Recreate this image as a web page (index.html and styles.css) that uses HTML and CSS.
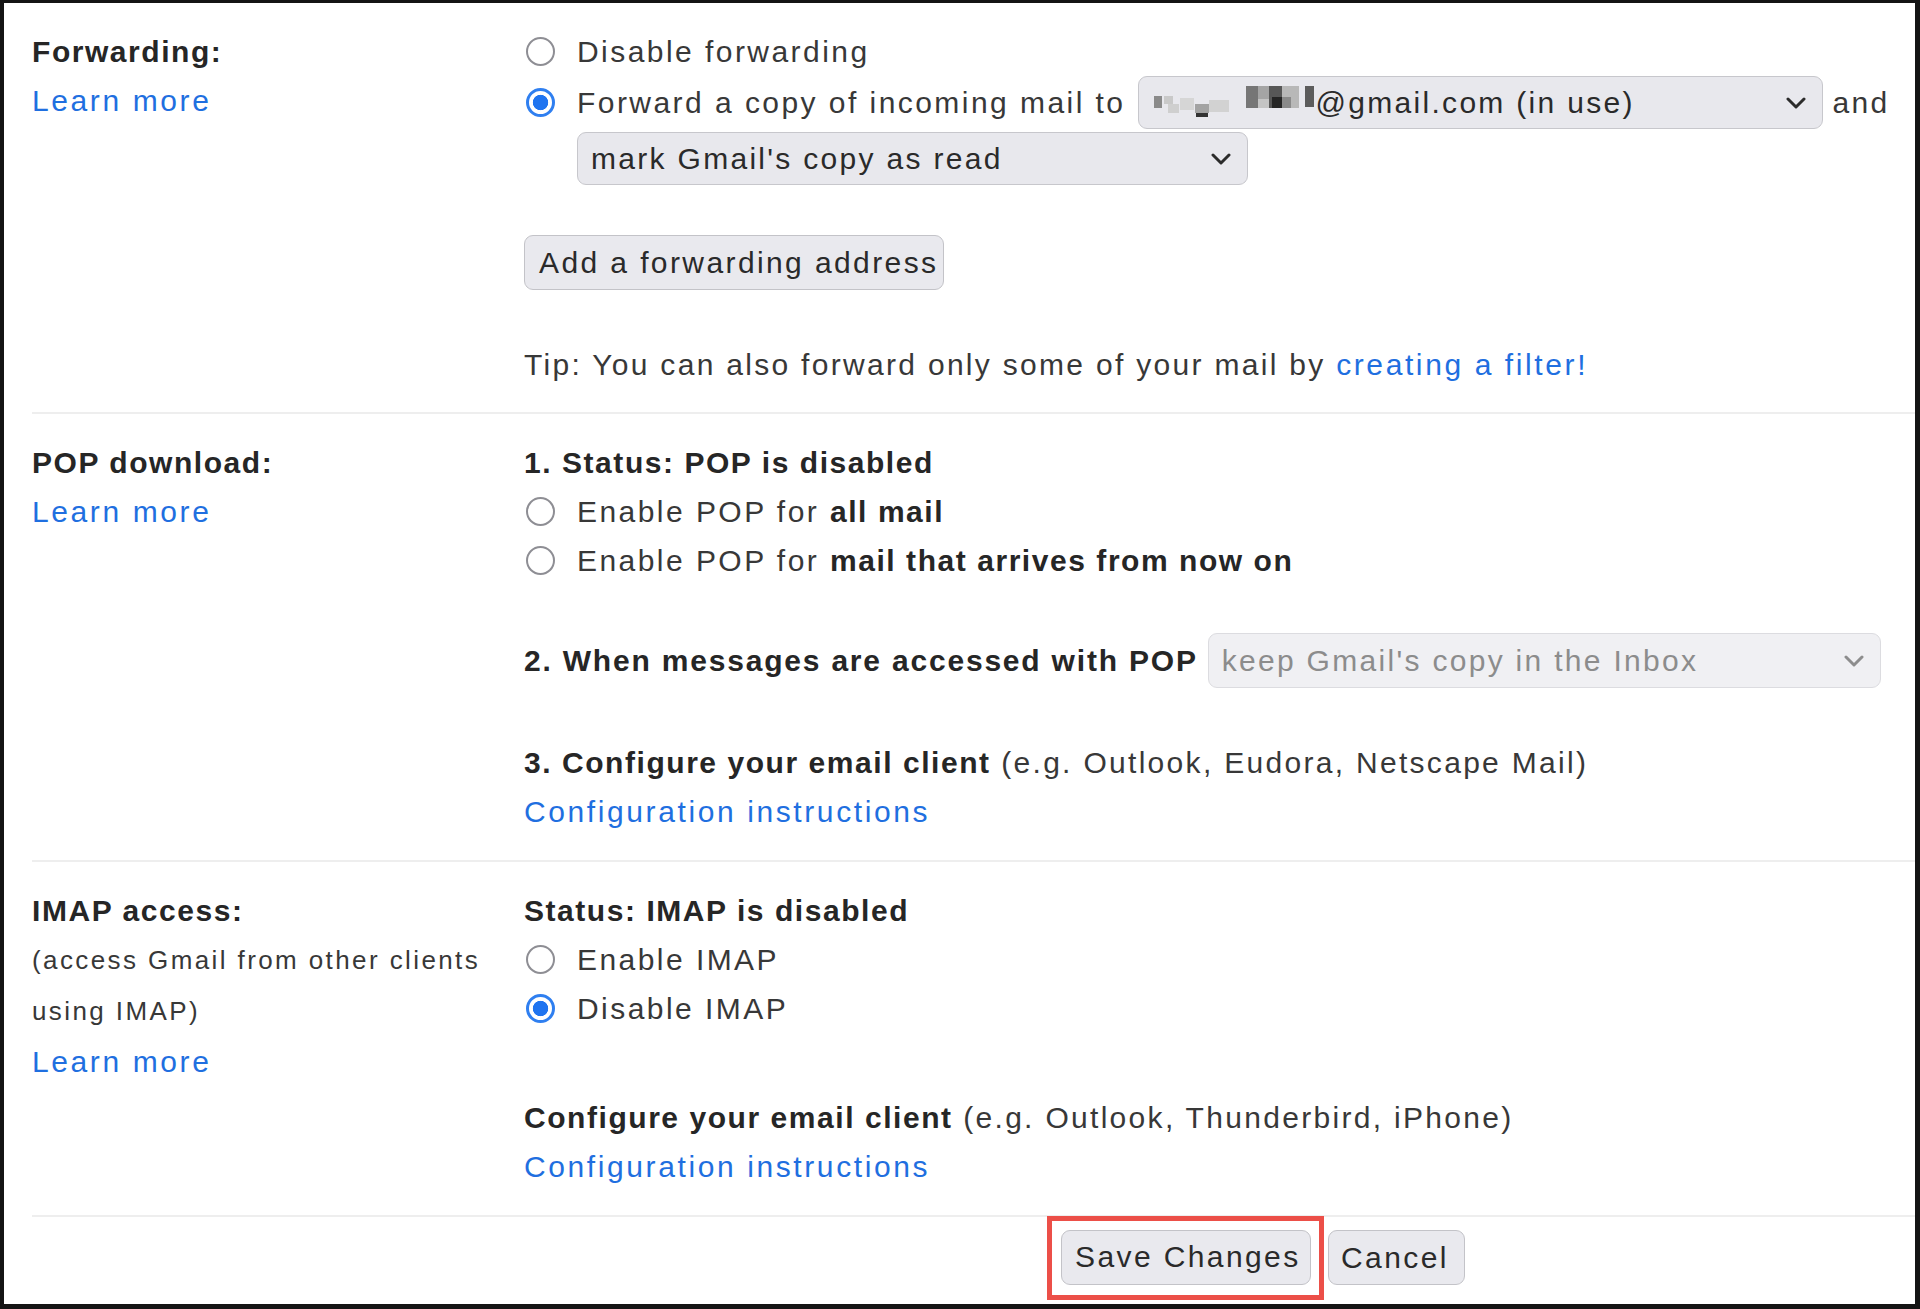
FILE: index.html
```html
<!DOCTYPE html>
<html>
<head>
<meta charset="utf-8">
<link rel="stylesheet" href="styles.css">
</head>
<body>
<div class="frame">
  <section class="section">
    <div class="label">
      <div class="title">Forwarding:</div>
      <a class="link">Learn more</a>
    </div>
    <div class="content">
      <div class="opt"><span class="radio"></span><span class="opt-text">Disable forwarding</span></div>
      <div class="opt opt-select">
        <span class="radio on"></span><span class="opt-text">Forward a copy of incoming mail to</span>
        <div class="select sel-email">
          <svg class="pix" width="162" height="34" viewBox="0 0 162 34">
            <rect x="2" y="10" width="8" height="12" fill="#8a8a8a"/>
            <rect x="12" y="10" width="9" height="8" fill="#c9c9c9"/>
            <rect x="16" y="18" width="11" height="9" fill="#cfcfcf"/>
            <rect x="28" y="12" width="14" height="12" fill="#d6d6d6"/>
            <rect x="43" y="18" width="14" height="9" fill="#a3a3a3"/>
            <rect x="44" y="27" width="12" height="4" fill="#333"/>
            <rect x="57" y="14" width="20" height="12" fill="#d2d2d2"/>
            <rect x="94" y="0" width="12" height="22" fill="#767676"/>
            <rect x="106" y="0" width="11" height="13" fill="#a4a4a4"/>
            <rect x="106" y="13" width="11" height="9" fill="#c4c4c4"/>
            <rect x="117" y="0" width="13" height="22" fill="#575757"/>
            <rect x="120" y="11" width="10" height="11" fill="#252525"/>
            <rect x="130" y="0" width="17" height="22" fill="#b8b8b8"/>
            <rect x="130" y="11" width="9" height="11" fill="#8a8a8a"/>
            <rect x="153" y="0" width="9" height="21" fill="#5c5c5c"/>
          </svg>
          <span class="sel-text">@gmail.com (in use)</span>
          <svg class="chev" width="20" height="12" viewBox="0 0 20 12"><path d="M2 2 L10 10 L18 2" fill="none" stroke="#2b2b2b" stroke-width="3" stroke-linecap="round" stroke-linejoin="round"/></svg>
        </div>
        <span class="and">and</span>
      </div>
      <div class="select sel-read">
        <span class="sel-text">mark Gmail's copy as read</span>
        <svg class="chev" width="20" height="12" viewBox="0 0 20 12"><path d="M2 2 L10 10 L18 2" fill="none" stroke="#2b2b2b" stroke-width="3" stroke-linecap="round" stroke-linejoin="round"/></svg>
      </div>
      <button class="btn btn-add">Add a forwarding address</button>
      <div class="line tip">Tip: You can also forward only some of your mail by <a class="link">creating a filter!</a></div>
    </div>
  </section>

  <section class="section">
    <div class="label">
      <div class="title">POP download:</div>
      <a class="link">Learn more</a>
    </div>
    <div class="content">
      <div class="line"><b>1. Status: POP is disabled</b></div>
      <div class="opt"><span class="radio"></span><span class="opt-text">Enable POP for <b>all mail</b></span></div>
      <div class="opt"><span class="radio"></span><span class="opt-text">Enable POP for <b>mail that arrives from now on</b></span></div>
      <div class="pop-row">
        <b>2. When messages are accessed with POP</b>
        <div class="select sel-pop disabled">
          <span class="sel-text">keep Gmail's copy in the Inbox</span>
          <svg class="chev" width="20" height="12" viewBox="0 0 20 12"><path d="M2 2 L10 10 L18 2" fill="none" stroke="#8d8d8d" stroke-width="3" stroke-linecap="round" stroke-linejoin="round"/></svg>
        </div>
      </div>
      <div class="line config"><b>3. Configure your email client</b> (e.g. Outlook, Eudora, Netscape Mail)</div>
      <div class="line"><a class="link">Configuration instructions</a></div>
    </div>
  </section>

  <section class="section">
    <div class="label">
      <div class="title">IMAP access:</div>
      <div class="desc">(access Gmail from other clients<br>using IMAP)</div>
      <a class="link">Learn more</a>
    </div>
    <div class="content">
      <div class="line"><b>Status: IMAP is disabled</b></div>
      <div class="opt"><span class="radio"></span><span class="opt-text">Enable IMAP</span></div>
      <div class="opt"><span class="radio on"></span><span class="opt-text">Disable IMAP</span></div>
      <div class="line config imap-config"><b>Configure your email client</b> (e.g. Outlook, Thunderbird, iPhone)</div>
      <div class="line"><a class="link">Configuration instructions</a></div>
    </div>
  </section>

  <div class="footer">
    <div class="highlight"><button class="btn btn-save">Save Changes</button></div>
    <button class="btn btn-cancel">Cancel</button>
  </div>
</div>
</body>
</html>
```

FILE: styles.css
```css
* { box-sizing: border-box; }
html, body { margin: 0; padding: 0; background: #ffffff; }
body {
  font-family: "Liberation Sans", Arial, sans-serif;
  font-size: 30px;
  letter-spacing: 2.3px;
  color: #383838;
}
b, .title { font-weight: bold; color: #262626; letter-spacing: 1.55px; }

.frame {
  width: 1920px;
  height: 1309px;
  border-style: solid;
  border-color: #141414;
  border-width: 3px 5px 5px 4px;
  background: #ffffff;
  overflow: hidden;
}

.section {
  display: grid;
  grid-template-columns: 492px 1fr;
  margin-left: 28px;
  padding: 24px 0 24px;
  border-bottom: 2px solid #eeeeee;
  line-height: 49px;
}
.section:first-child { padding-bottom: 23px; }

.label { display: flex; flex-direction: column; align-items: flex-start; }
.link { color: #1f6fe0; text-decoration: none; cursor: pointer; letter-spacing: 2.6px; }
.desc { font-size: 26px; line-height: 51px; color: #383838; letter-spacing: 2.4px; }

.content { display: flex; flex-direction: column; align-items: flex-start; }
.line { height: 49px; white-space: nowrap; }

.opt { display: flex; align-items: center; height: 49px; white-space: nowrap; }
.opt-text { letter-spacing: 2.45px; }
.opt-text b { letter-spacing: 1.55px; }
.opt-select { height: 53px; }

.radio {
  width: 29px; height: 29px;
  margin: 0 22px 0 2px;
  border-radius: 50%;
  border: 2px solid #8e8e94;
  background: #ffffff;
  flex: none;
}
.radio.on {
  border: 3px solid #2f7ff0;
  background: radial-gradient(circle closest-side, #1f74f0 64%, #ffffff 70%);
}

.select {
  display: flex;
  align-items: center;
  background: #e8e8ed;
  border: 1px solid #c7c7cc;
  border-radius: 9px;
  padding: 0 16px 0 13px;
  color: #2a2a2a;
  white-space: nowrap;
  flex: none;
}
.sel-text { flex: 1; }
.chev { flex: none; }

.sel-email { width: 685px; height: 53px; margin-left: 12px; padding-left: 13px; }
.pix { flex: none; margin: 1px 2px 0 0; }
.and { margin-left: 10px; }

.sel-read { width: 671px; height: 53px; margin: 3px 0 0 53px; }

.btn {
  font-family: "Liberation Sans", Arial, sans-serif;
  font-size: 30px;
  letter-spacing: 2.4px;
  color: #2a2a2a;
  background: #e9e9ee;
  border: 1px solid #c3c3c8;
  border-radius: 9px;
  height: 55px;
  padding: 0 10px 0 14px;
  white-space: nowrap;
  cursor: pointer;
}
.btn-add { margin-top: 50px; width: 420px; padding: 0 6px 0 14px; text-align: left; }
.tip { margin-top: 50px; }

.pop-row {
  display: flex;
  align-items: center;
  margin-top: 48px;
  height: 55px;
  white-space: nowrap;
}
.pop-row b { letter-spacing: 1.8px; }
.sel-pop { width: 673px; height: 55px; margin-left: 10px; }
.select.disabled { background: #f0f0f3; border-color: #dcdce0; color: #8c8c8c; }
.config { margin-top: 50px; }
.imap-config { margin-top: 60px; }

.footer {
  display: flex;
  align-items: center;
  padding-left: 1043px;
  height: 86px;
}
.highlight {
  border: 5px solid #ec4f48;
  padding: 9px 8px 10px 9px;
  margin-top: -5px;
}
.btn-save { width: 250px; padding: 0 6px 0 13px; text-align: left; }
.btn-cancel { margin-left: 4px; width: 137px; margin-top: -5px; padding: 0 8px 0 12px; text-align: left; }
```
